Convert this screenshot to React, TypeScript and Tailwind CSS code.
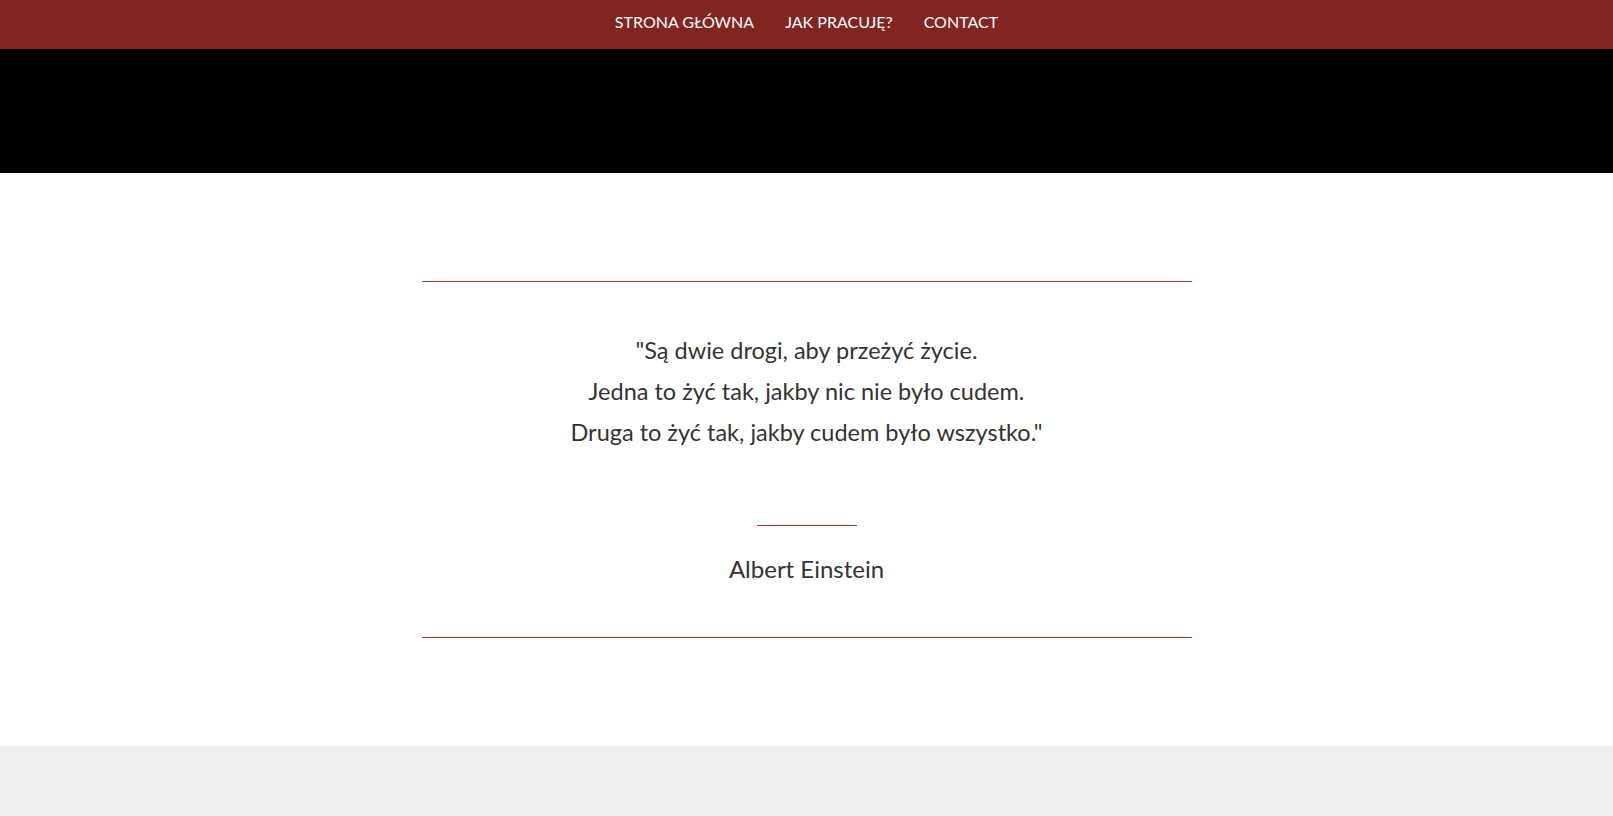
export default function App() {
  const links = ['Strona główna', 'Jak pracuję?', 'Contact'];

  return (
    <div className="min-h-screen bg-[#eeeeee] font-['Lato','Liberation_Sans',sans-serif]">
      <nav className="flex h-[49px] items-center justify-center gap-[31px] bg-[#82251f] pb-[6px]">
        {links.map((link) => (
          <a key={link} href="#" className="text-[16px] uppercase text-white">
            {link}
          </a>
        ))}
      </nav>

      <div className="h-[124px] bg-black" />

      <section className="bg-white py-[108px]">
        <div className="mx-auto w-[770px] border-y border-[#a8362a] text-center text-[#333333]">
          <div className="pt-[48px] text-[23.5px] leading-[41px]">
            <p>"Są dwie drogi, aby przeżyć życie.</p>
            <p>Jedna to żyć tak, jakby nic nie było cudem.</p>
            <p>Druga to żyć tak, jakby cudem było wszystko."</p>
          </div>
          <div className="mx-auto mt-[72px] h-px w-[100px] bg-[#a8362a]" />
          <p className="pt-[22px] pb-[48px] text-[24px] leading-[41px]">Albert Einstein</p>
        </div>
      </section>
    </div>
  );
}
